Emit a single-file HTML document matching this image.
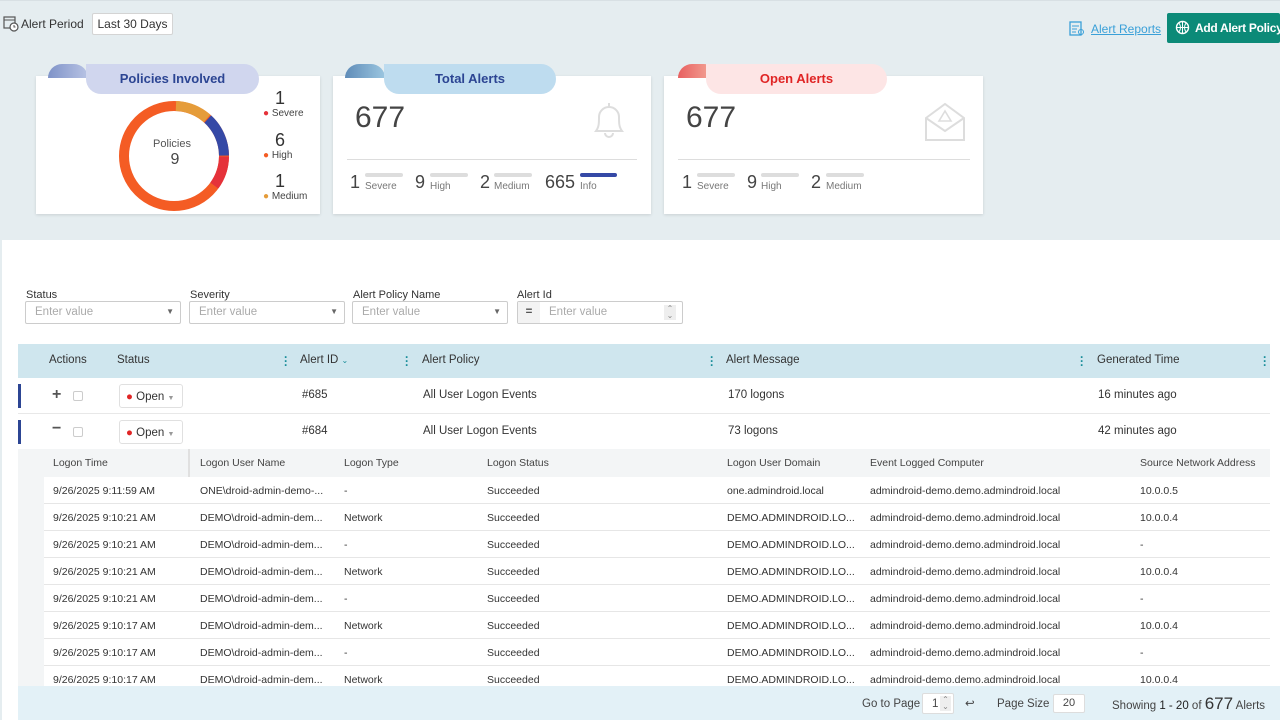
<!DOCTYPE html>
<html><head><meta charset="utf-8"><style>
*{box-sizing:border-box;margin:0;padding:0}
body{width:1280px;height:720px;overflow:hidden;font-family:"Liberation Sans",sans-serif;background:#e5edf0;color:#333;position:relative;font-size:11px}
.abs{position:absolute}
.card{position:absolute;background:#fff;top:76px;height:138px;box-shadow:0 1px 3px rgba(0,0,0,.12)}
.tab{position:absolute;top:64px;height:30px;border-radius:0 16px 16px 16px;font-size:13px;text-align:center;line-height:30px;font-weight:bold}
.big{font-size:30px;color:#444}
.sm{font-size:10px;color:#777}
.bar{position:absolute;height:4px;background:#ddd;border-radius:2px}
.lbl{font-size:11px;color:#333}
.inp{position:absolute;top:301px;height:23px;border:1px solid #ccc;border-radius:2px;background:#fff;color:#aaa;font-size:11.5px;padding:4px 9px}
.inp .ar{position:absolute;right:6px;top:5px;font-size:8px;color:#666}
.row{position:absolute;left:18px;width:1252px;border-bottom:1px solid #e8e8e8;font-size:11.5px;color:#333}
.sub{position:absolute;left:44px;width:1226px;height:27px;border-bottom:1px solid #e6e6e6;font-size:10.5px;color:#333;background:#fff}
.sub span,.subh span{position:absolute;top:8px;white-space:nowrap}
.subh{position:absolute;left:44px;top:449px;width:1226px;height:28px;background:#f3f5f6;font-size:10.5px;color:#444}
.dots{position:absolute;top:355px;color:#1a8e9a;font-size:12px;font-weight:bold;line-height:4px;width:3px}
</style></head><body>
<div class="abs" style="left:0;top:0;width:1280px;height:1px;background:#d8e0e4"></div>
<svg class="abs" style="left:3px;top:15px" width="16" height="17" viewBox="0 0 16 17"><rect x="1" y="2" width="11" height="11" fill="none" stroke="#555" stroke-width="1.2"/><line x1="1" y1="5" x2="12" y2="5" stroke="#555"/><circle cx="11" cy="12" r="4" fill="#fff" stroke="#555" stroke-width="1.2"/><path d="M11 10v2h1.5" stroke="#555" fill="none"/></svg>
<div class="abs" style="left:21px;top:17px;font-size:12px;color:#333">Alert Period</div>
<div class="abs" style="left:92px;top:13px;width:81px;height:22px;background:#fff;border:1px solid #d4d4d4;border-radius:2px;font-size:12px;line-height:20px;text-align:center;color:#333">Last 30 Days</div>
<svg class="abs" style="left:1069px;top:21px" width="17" height="16" viewBox="0 0 17 16"><rect x="1" y="1" width="11" height="13" fill="none" stroke="#3aa0d8" stroke-width="1.3"/><path d="M3 5h7M3 8h5M3 11h4" stroke="#3aa0d8"/><circle cx="12" cy="11" r="2.5" fill="none" stroke="#3aa0d8"/></svg>
<div class="abs" style="left:1091px;top:22px;font-size:12px;color:#3aa0d8;text-decoration:underline">Alert Reports</div>
<div class="abs" style="left:1167px;top:13px;width:113px;height:30px;background:#0c8a78;color:#fff;font-size:12px;font-weight:bold;line-height:30px;padding-left:28px;border-radius:2px;white-space:nowrap;letter-spacing:-0.3px">Add Alert Policy</div>
<svg class="abs" style="left:1175px;top:20px" width="16" height="16" viewBox="0 0 16 16"><circle cx="7.5" cy="7.5" r="6" fill="none" stroke="#fff" stroke-width="1.4"/><path d="M1.5 7.5h12M7.5 1.5v12M4 3c2 3 2 6 0 9M11 3c-2 3-2 6 0 9" stroke="#fff" fill="none"/></svg>

<div class="card" style="left:36px;width:284px"></div>
<div class="abs" style="left:48px;top:64px;width:40px;height:14px;border-radius:20px 20px 0 0;background:linear-gradient(90deg,#7f93c8,#b8c3e4)"></div>
<div class="tab" style="left:86px;width:173px;background:#d0d6ee;color:#2c4593">Policies Involved</div>
<svg class="abs" style="left:118px;top:100px" width="112" height="112" viewBox="0 0 112 112">
<g transform="rotate(-90 56 56)" fill="none" stroke-width="10">
<circle cx="56" cy="56" r="50" stroke="#f45c24"/>
<circle cx="56" cy="56" r="50" stroke="#e59c3a" stroke-dasharray="34 400" stroke-dashoffset="-2"/>
<circle cx="56" cy="56" r="50" stroke="#3549a6" stroke-dasharray="41 400" stroke-dashoffset="-37"/>
<circle cx="56" cy="56" r="50" stroke="#e5323a" stroke-dasharray="31 400" stroke-dashoffset="-79"/>
</g></svg>
<div class="abs" style="left:144px;top:138px;width:56px;text-align:center;font-size:11px;color:#555">Policies</div>
<div class="abs" style="left:144px;top:151px;width:62px;text-align:center;font-size:16px;color:#444">9</div>
<div class="abs" style="left:275px;top:88px;font-size:18px;color:#333">1</div>
<div class="abs" style="left:263px;top:108px;font-size:10px;color:#444"><span style="color:#e5323a">●</span> Severe</div>
<div class="abs" style="left:275px;top:130px;font-size:18px;color:#333">6</div>
<div class="abs" style="left:263px;top:150px;font-size:10px;color:#444"><span style="color:#f45c24">●</span> High</div>
<div class="abs" style="left:275px;top:171px;font-size:18px;color:#333">1</div>
<div class="abs" style="left:263px;top:191px;font-size:10px;color:#444"><span style="color:#e59c3a">●</span> Medium</div>

<div class="card" style="left:333px;width:318px"></div>
<div class="abs" style="left:345px;top:64px;width:40px;height:14px;border-radius:20px 20px 0 0;background:linear-gradient(90deg,#5f8cb8,#9bc6e0)"></div>
<div class="tab" style="left:384px;width:172px;background:#bedcef;color:#2c4593">Total Alerts</div>
<div class="abs big" style="left:355px;top:101px">677</div>
<svg class="abs" style="left:588px;top:99px" width="42" height="44" viewBox="0 0 42 44"><path d="M8 32c3-4 3-8 3-14a10 10 0 0 1 20 0c0 6 0 10 3 14z" fill="none" stroke="#ddd" stroke-width="2"/><path d="M17 34a4 4 0 0 0 8 0" fill="none" stroke="#ddd" stroke-width="2"/><line x1="21" y1="4" x2="21" y2="8" stroke="#ddd" stroke-width="2"/></svg>
<div class="abs" style="left:347px;top:159px;width:290px;height:1px;background:#ddd"></div>
<div class="abs" style="left:350px;top:172px;font-size:18px;color:#444">1</div><div class="abs sm" style="left:365px;top:181px">Severe</div><div class="bar" style="left:365px;top:173px;width:38px"></div>
<div class="abs" style="left:415px;top:172px;font-size:18px;color:#444">9</div><div class="abs sm" style="left:430px;top:181px">High</div><div class="bar" style="left:430px;top:173px;width:38px"></div>
<div class="abs" style="left:480px;top:172px;font-size:18px;color:#444">2</div><div class="abs sm" style="left:494px;top:181px">Medium</div><div class="bar" style="left:494px;top:173px;width:38px"></div>
<div class="abs" style="left:545px;top:172px;font-size:18px;color:#444">665</div><div class="abs sm" style="left:580px;top:181px">Info</div><div class="bar" style="left:580px;top:173px;width:37px;background:#3549a6"></div>

<div class="card" style="left:664px;width:319px"></div>
<div class="abs" style="left:678px;top:64px;width:40px;height:14px;border-radius:20px 20px 0 0;background:linear-gradient(90deg,#e86060,#f5b0a0)"></div>
<div class="tab" style="left:706px;width:181px;background:#fde5e5;color:#e02525">Open Alerts</div>
<div class="abs big" style="left:686px;top:101px">677</div>
<svg class="abs" style="left:922px;top:100px" width="46" height="42" viewBox="0 0 46 42"><path d="M4 18l19-14 19 14v22H4z M4 18l19 13 19-13" fill="none" stroke="#ddd" stroke-width="2"/><path d="M23 11l6 10H17z" fill="none" stroke="#ddd" stroke-width="1.6"/></svg>
<div class="abs" style="left:678px;top:159px;width:292px;height:1px;background:#ddd"></div>
<div class="abs" style="left:682px;top:172px;font-size:18px;color:#444">1</div><div class="abs sm" style="left:697px;top:181px">Severe</div><div class="bar" style="left:697px;top:173px;width:38px"></div>
<div class="abs" style="left:747px;top:172px;font-size:18px;color:#444">9</div><div class="abs sm" style="left:761px;top:181px">High</div><div class="bar" style="left:761px;top:173px;width:38px"></div>
<div class="abs" style="left:811px;top:172px;font-size:18px;color:#444">2</div><div class="abs sm" style="left:826px;top:181px">Medium</div><div class="bar" style="left:826px;top:173px;width:38px"></div>

<div class="abs" style="left:2px;top:240px;width:1278px;height:480px;background:#fff"></div>
<div class="abs lbl" style="left:26px;top:289px">Status</div>
<div class="abs lbl" style="left:190px;top:289px">Severity</div>
<div class="abs lbl" style="left:353px;top:289px">Alert Policy Name</div>
<div class="abs lbl" style="left:517px;top:289px">Alert Id</div>
<div class="inp" style="left:25px;width:156px">Enter value<span class="ar">▼</span></div>
<div class="inp" style="left:189px;width:156px">Enter value<span class="ar">▼</span></div>
<div class="inp" style="left:352px;width:156px">Enter value<span class="ar">▼</span></div>
<div class="inp" style="left:517px;width:166px;background:#fff;padding-left:31px">Enter value<span style="position:absolute;left:0;top:0;width:22px;height:21px;background:#f3f3f3;color:#555;text-align:center;line-height:21px;font-weight:bold">=</span><span style="position:absolute;right:6px;top:3px;width:12px;height:15px;background:#eee;font-size:8px;color:#888;text-align:center;line-height:7px">⌃<br>⌄</span></div>

<div class="abs" style="left:18px;top:344px;width:1252px;height:34px;background:#cfe6ee;font-size:11.5px;color:#333">
<span class="abs" style="left:31px;top:10px">Actions</span><span class="abs" style="left:99px;top:10px">Status</span>
<span class="abs" style="left:282px;top:10px">Alert ID <span style="color:#1a8e9a;font-size:8px">⌄</span></span><span class="abs" style="left:404px;top:10px">Alert Policy</span>
<span class="abs" style="left:708px;top:10px">Alert Message</span><span class="abs" style="left:1079px;top:10px">Generated Time</span></div>
<div class="dots" style="left:284px">·<br>·<br>·</div><div class="dots" style="left:405px">·<br>·<br>·</div><div class="dots" style="left:710px">·<br>·<br>·</div><div class="dots" style="left:1080px">·<br>·<br>·</div><div class="dots" style="left:1263px">·<br>·<br>·</div>

<div class="row" style="top:378px;height:36px"><div class="abs" style="left:0;top:6px;width:3px;height:24px;background:#2c4593"></div>
<span class="abs" style="left:34px;top:8px;font-size:16px;font-weight:bold;color:#555">+</span><span class="abs" style="left:55px;top:13px;width:10px;height:10px;border:1px solid #ccc;border-radius:2px"></span>
<span class="abs" style="left:101px;top:6px;width:64px;height:24px;border:1px solid #e0e0e0;border-radius:3px;padding:6px 0 0 6px;font-size:11.5px"><span style="color:#e02525">●</span> Open <span style="color:#999;font-size:7px">▼</span></span>
<span class="abs" style="left:284px;top:11px">#685</span><span class="abs" style="left:405px;top:11px">All User Logon Events</span><span class="abs" style="left:710px;top:11px">170 logons</span><span class="abs" style="left:1080px;top:11px">16 minutes ago</span></div>
<div class="row" style="top:414px;height:35px;border:none"><div class="abs" style="left:0;top:6px;width:3px;height:24px;background:#2c4593"></div>
<span class="abs" style="left:34px;top:6px;font-size:16px;font-weight:bold;color:#555">−</span><span class="abs" style="left:55px;top:13px;width:10px;height:10px;border:1px solid #ccc;border-radius:2px"></span>
<span class="abs" style="left:101px;top:6px;width:64px;height:24px;border:1px solid #e0e0e0;border-radius:3px;padding:6px 0 0 6px;font-size:11.5px"><span style="color:#e02525">●</span> Open <span style="color:#999;font-size:7px">▼</span></span>
<span class="abs" style="left:284px;top:11px">#684</span><span class="abs" style="left:405px;top:11px">All User Logon Events</span><span class="abs" style="left:710px;top:11px">73 logons</span><span class="abs" style="left:1080px;top:11px">42 minutes ago</span></div>
<div class="abs" style="left:18px;top:449px;width:26px;height:237px;background:#f3f5f6"></div>
<div class="subh"><span style="left:9px">Logon Time</span><span style="left:156px">Logon User Name</span><span style="left:300px">Logon Type</span><span style="left:443px">Logon Status</span><span style="left:683px">Logon User Domain</span><span style="left:826px">Event Logged Computer</span><span style="left:1096px">Source Network Address</span><div class="abs" style="left:144px;top:0;width:2px;height:28px;background:#e0e0e0"></div></div>
<div class="abs" style="left:188px;top:477px;width:1px;height:209px;background:#e6e6e6"></div>

<div class="sub" style="top:477px"><span style="left:9px">9/26/2025 9:11:59 AM</span><span style="left:156px">ONE\droid-admin-demo-...</span><span style="left:300px">-</span><span style="left:443px">Succeeded</span><span style="left:683px">one.admindroid.local</span><span style="left:826px">admindroid-demo.demo.admindroid.local</span><span style="left:1096px">10.0.0.5</span></div>
<div class="sub" style="top:504px"><span style="left:9px">9/26/2025 9:10:21 AM</span><span style="left:156px">DEMO\droid-admin-dem...</span><span style="left:300px">Network</span><span style="left:443px">Succeeded</span><span style="left:683px">DEMO.ADMINDROID.LO...</span><span style="left:826px">admindroid-demo.demo.admindroid.local</span><span style="left:1096px">10.0.0.4</span></div>
<div class="sub" style="top:531px"><span style="left:9px">9/26/2025 9:10:21 AM</span><span style="left:156px">DEMO\droid-admin-dem...</span><span style="left:300px">-</span><span style="left:443px">Succeeded</span><span style="left:683px">DEMO.ADMINDROID.LO...</span><span style="left:826px">admindroid-demo.demo.admindroid.local</span><span style="left:1096px">-</span></div>
<div class="sub" style="top:558px"><span style="left:9px">9/26/2025 9:10:21 AM</span><span style="left:156px">DEMO\droid-admin-dem...</span><span style="left:300px">Network</span><span style="left:443px">Succeeded</span><span style="left:683px">DEMO.ADMINDROID.LO...</span><span style="left:826px">admindroid-demo.demo.admindroid.local</span><span style="left:1096px">10.0.0.4</span></div>
<div class="sub" style="top:585px"><span style="left:9px">9/26/2025 9:10:21 AM</span><span style="left:156px">DEMO\droid-admin-dem...</span><span style="left:300px">-</span><span style="left:443px">Succeeded</span><span style="left:683px">DEMO.ADMINDROID.LO...</span><span style="left:826px">admindroid-demo.demo.admindroid.local</span><span style="left:1096px">-</span></div>
<div class="sub" style="top:612px"><span style="left:9px">9/26/2025 9:10:17 AM</span><span style="left:156px">DEMO\droid-admin-dem...</span><span style="left:300px">Network</span><span style="left:443px">Succeeded</span><span style="left:683px">DEMO.ADMINDROID.LO...</span><span style="left:826px">admindroid-demo.demo.admindroid.local</span><span style="left:1096px">10.0.0.4</span></div>
<div class="sub" style="top:639px"><span style="left:9px">9/26/2025 9:10:17 AM</span><span style="left:156px">DEMO\droid-admin-dem...</span><span style="left:300px">-</span><span style="left:443px">Succeeded</span><span style="left:683px">DEMO.ADMINDROID.LO...</span><span style="left:826px">admindroid-demo.demo.admindroid.local</span><span style="left:1096px">-</span></div>
<div class="sub" style="top:666px"><span style="left:9px">9/26/2025 9:10:17 AM</span><span style="left:156px">DEMO\droid-admin-dem...</span><span style="left:300px">Network</span><span style="left:443px">Succeeded</span><span style="left:683px">DEMO.ADMINDROID.LO...</span><span style="left:826px">admindroid-demo.demo.admindroid.local</span><span style="left:1096px">10.0.0.4</span></div>

<div class="abs" style="left:18px;top:686px;width:1262px;height:34px;background:#e3f1f7;font-size:11.5px;color:#444">
<span class="abs" style="left:844px;top:12px">Go to Page</span>
<span class="abs" style="left:904px;top:7px;width:32px;height:21px;background:#fff;border:1px solid #ddd;border-radius:2px;padding:4px 0 0 9px">1<span style="position:absolute;right:2px;top:2px;width:11px;height:15px;background:#eee;font-size:8px;line-height:7px;text-align:center;color:#888">⌃<br>⌄</span></span>
<span class="abs" style="left:947px;top:10px">↩</span>
<span class="abs" style="left:979px;top:12px">Page Size</span>
<span class="abs" style="left:1035px;top:8px;width:32px;height:19px;background:#fff;border:1px solid #ddd;border-radius:2px;text-align:center;line-height:17px;font-size:11px">20</span>
<span class="abs" style="left:1094px;top:8px;white-space:nowrap">Showing <b style="font-weight:normal;color:#222">1 - 20</b> of <span style="font-size:17px;color:#333">677</span> Alerts</span>
</div>
</body></html>
